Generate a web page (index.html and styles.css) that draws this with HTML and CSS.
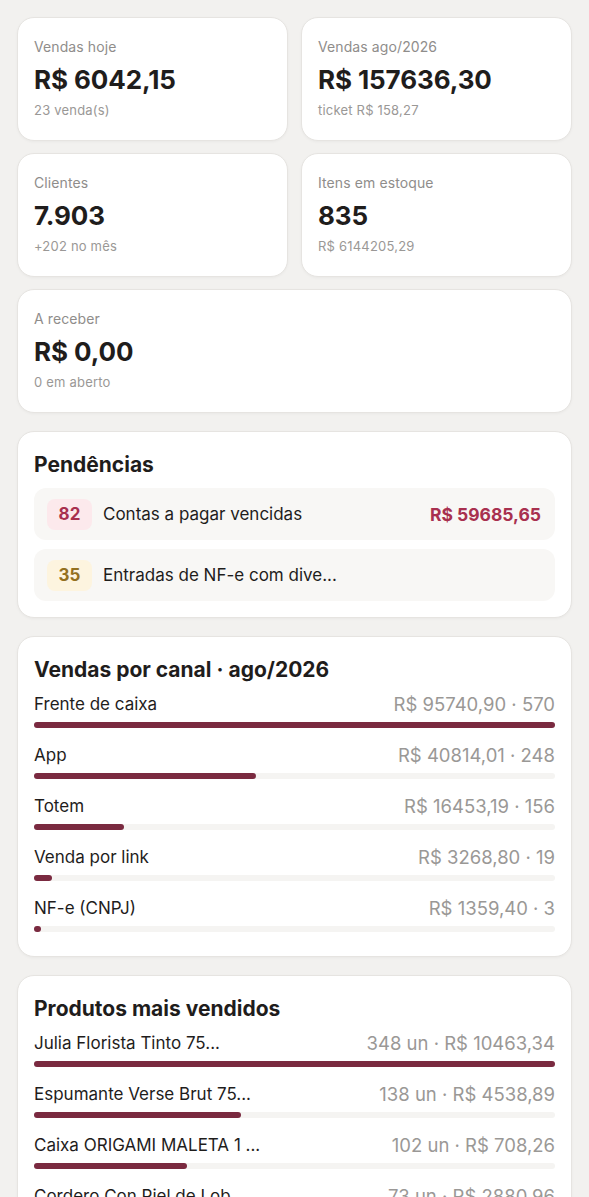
FILE: index.html
```html
<!DOCTYPE html>
<html lang="pt-BR">
<head>
    <meta charset="UTF-8">
    <meta name="viewport" content="width=device-width, initial-scale=1.0">
    <title>Painel</title>
    <link rel="stylesheet" href="styles.css">
</head>
<body>
    <div class="page">
        <!-- Resumo -->
        <div class="stats">
            <div class="card stat">
                <div class="stat-label">Vendas hoje</div>
                <div class="stat-value">R$ 6042,15</div>
                <div class="stat-sub">23 venda(s)</div>
            </div>
            <div class="card stat">
                <div class="stat-label">Vendas ago/2026</div>
                <div class="stat-value">R$ 157636,30</div>
                <div class="stat-sub">ticket R$ 158,27</div>
            </div>
            <div class="card stat">
                <div class="stat-label">Clientes</div>
                <div class="stat-value">7.903</div>
                <div class="stat-sub">+202 no mês</div>
            </div>
            <div class="card stat">
                <div class="stat-label">Itens em estoque</div>
                <div class="stat-value">835</div>
                <div class="stat-sub">R$ 6144205,29</div>
            </div>
            <div class="card stat wide">
                <div class="stat-label">A receber</div>
                <div class="stat-value">R$ 0,00</div>
                <div class="stat-sub">0 em aberto</div>
            </div>
        </div>

        <!-- Pendências -->
        <div class="card section">
            <h2>Pendências</h2>
            <div class="pending-list">
                <div class="pending">
                    <span class="badge red">82</span>
                    <span class="pending-text">Contas a pagar vencidas</span>
                    <span class="pending-amount">R$ 59685,65</span>
                </div>
                <div class="pending">
                    <span class="badge amber">35</span>
                    <span class="pending-text">Entradas de NF-e com dive...</span>
                </div>
            </div>
        </div>

        <!-- Vendas por canal -->
        <div class="card section">
            <h2>Vendas por canal · ago/2026</h2>
            <div class="bars">
                <div class="bar-row">
                    <div class="bar-head"><span>Frente de caixa</span><span class="bar-value">R$ 95740,90 · 570</span></div>
                    <div class="track"><div class="fill" style="width: 100%"></div></div>
                </div>
                <div class="bar-row">
                    <div class="bar-head"><span>App</span><span class="bar-value">R$ 40814,01 · 248</span></div>
                    <div class="track"><div class="fill" style="width: 42.6%"></div></div>
                </div>
                <div class="bar-row">
                    <div class="bar-head"><span>Totem</span><span class="bar-value">R$ 16453,19 · 156</span></div>
                    <div class="track"><div class="fill" style="width: 17.2%"></div></div>
                </div>
                <div class="bar-row">
                    <div class="bar-head"><span>Venda por link</span><span class="bar-value">R$ 3268,80 · 19</span></div>
                    <div class="track"><div class="fill" style="width: 3.4%"></div></div>
                </div>
                <div class="bar-row">
                    <div class="bar-head"><span>NF-e (CNPJ)</span><span class="bar-value">R$ 1359,40 · 3</span></div>
                    <div class="track"><div class="fill" style="width: 1.4%"></div></div>
                </div>
            </div>
        </div>

        <!-- Produtos mais vendidos -->
        <div class="card section">
            <h2>Produtos mais vendidos</h2>
            <div class="bars">
                <div class="bar-row">
                    <div class="bar-head"><span>Julia Florista Tinto 75...</span><span class="bar-value">348 un · R$ 10463,34</span></div>
                    <div class="track"><div class="fill" style="width: 100%"></div></div>
                </div>
                <div class="bar-row">
                    <div class="bar-head"><span>Espumante Verse Brut 75...</span><span class="bar-value">138 un · R$ 4538,89</span></div>
                    <div class="track"><div class="fill" style="width: 39.7%"></div></div>
                </div>
                <div class="bar-row">
                    <div class="bar-head"><span>Caixa ORIGAMI MALETA 1 ...</span><span class="bar-value">102 un · R$ 708,26</span></div>
                    <div class="track"><div class="fill" style="width: 29.3%"></div></div>
                </div>
                <div class="bar-row">
                    <div class="bar-head"><span>Cordero Con Piel de Lob...</span><span class="bar-value">73 un · R$ 2880,96</span></div>
                    <div class="track"><div class="fill" style="width: 21%"></div></div>
                </div>
            </div>
        </div>
    </div>
</body>
</html>
```

FILE: styles.css
```css
body {
    margin: 0;
    background-color: #f2f1ef;
    font-family: Inter, "Noto Sans", Arial, sans-serif;
    color: #1f1d1c;
}
.page {
    padding: 17px;
    display: flex;
    flex-direction: column;
    gap: 18px;
}
.card {
    background-color: #ffffff;
    border: 1px solid #e6e4e1;
    border-radius: 17px;
    box-shadow: 0 1px 3px rgba(0, 0, 0, 0.04);
}

/* Resumo */
.stats {
    display: grid;
    grid-template-columns: 1fr 1fr;
    gap: 12px 13px;
}
.stat {
    padding: 19px 16px 21px;
}
.stat.wide {
    grid-column: span 2;
}
.stat-label {
    font-size: 14px;
    line-height: 20px;
    color: #8f8d8b;
    letter-spacing: 0.1px;
}
.stat-value {
    margin-top: 8px;
    font-size: 26px;
    line-height: 30px;
    font-weight: 700;
    letter-spacing: -0.1px;
}
.stat-sub {
    margin-top: 6px;
    font-size: 13px;
    line-height: 18px;
    color: #9a9896;
    letter-spacing: 0.2px;
}

/* Secoes */
.section {
    padding: 20px 16px 16px;
}
.section h2 {
    margin: 0 0 10px;
    font-size: 21px;
    line-height: 26px;
    font-weight: 700;
}
.pending-list {
    display: flex;
    flex-direction: column;
    gap: 9px;
}
.pending {
    display: flex;
    align-items: center;
    height: 52px;
    padding: 0 14px 0 13px;
    background-color: #f8f7f5;
    border-radius: 12px;
}
.badge {
    width: 45px;
    height: 31px;
    border-radius: 8px;
    display: flex;
    align-items: center;
    justify-content: center;
    font-size: 17px;
    font-weight: 700;
}
.badge.red {
    background-color: #fce9ec;
    color: #a8304f;
}
.badge.amber {
    background-color: #fdf4df;
    color: #94701f;
}
.pending-text {
    margin-left: 11px;
    flex: 1;
    font-size: 17px;
}
.pending-amount {
    font-size: 17.5px;
    font-weight: 700;
    color: #a8304f;
}

/* Barras */
.bars {
    display: flex;
    flex-direction: column;
    gap: 16px;
    padding-bottom: 8px;
}
.bar-head {
    display: flex;
    justify-content: space-between;
    font-size: 17px;
    line-height: 22px;
}
.bar-value {
    color: #9a9896;
    font-size: 18.5px;
}
.track {
    margin-top: 7px;
    height: 6px;
    border-radius: 3px;
    background-color: #f5f4f2;
}
.fill {
    height: 100%;
    min-width: 6px;
    border-radius: 3px;
    background-color: #7a2a40;
}
```
